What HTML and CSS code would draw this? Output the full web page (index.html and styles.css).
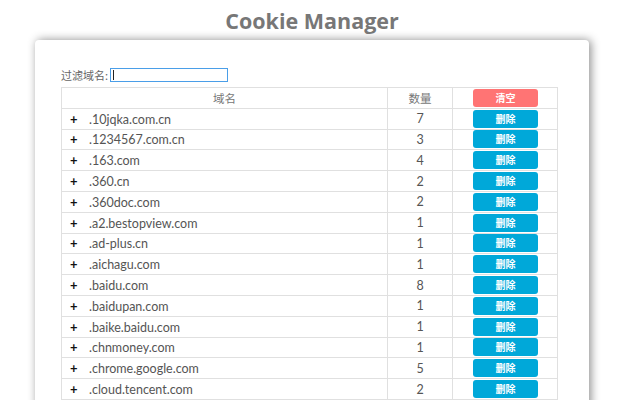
FILE: index.html
```html
<!DOCTYPE html>
<html>
<head>
<meta charset="utf-8">
<link rel="stylesheet" href="styles.css">
</head>
<body>
<h1 class="title">Cookie Manager</h1>
<div class="card">
  <div class="filter">
    <label class="filter-label">过滤域名:</label>
    <span class="filter-input"><span class="caret"></span></span>
  </div>
  <table class="cookies">
    <thead>
      <tr>
        <th class="col-domain">域名</th>
        <th class="col-count">数量</th>
        <th class="col-act"><button class="btn btn-clear">清空</button></th>
      </tr>
    </thead>
    <tbody>
      <tr><td class="domain"><span class="plus">+</span>.10jqka.com.cn</td><td class="count">7</td><td class="act"><button class="btn btn-del">删除</button></td></tr>
      <tr><td class="domain"><span class="plus">+</span>.1234567.com.cn</td><td class="count">3</td><td class="act"><button class="btn btn-del">删除</button></td></tr>
      <tr><td class="domain"><span class="plus">+</span>.163.com</td><td class="count">4</td><td class="act"><button class="btn btn-del">删除</button></td></tr>
      <tr><td class="domain"><span class="plus">+</span>.360.cn</td><td class="count">2</td><td class="act"><button class="btn btn-del">删除</button></td></tr>
      <tr><td class="domain"><span class="plus">+</span>.360doc.com</td><td class="count">2</td><td class="act"><button class="btn btn-del">删除</button></td></tr>
      <tr><td class="domain"><span class="plus">+</span>.a2.bestopview.com</td><td class="count">1</td><td class="act"><button class="btn btn-del">删除</button></td></tr>
      <tr><td class="domain"><span class="plus">+</span>.ad-plus.cn</td><td class="count">1</td><td class="act"><button class="btn btn-del">删除</button></td></tr>
      <tr><td class="domain"><span class="plus">+</span>.aichagu.com</td><td class="count">1</td><td class="act"><button class="btn btn-del">删除</button></td></tr>
      <tr><td class="domain"><span class="plus">+</span>.baidu.com</td><td class="count">8</td><td class="act"><button class="btn btn-del">删除</button></td></tr>
      <tr><td class="domain"><span class="plus">+</span>.baidupan.com</td><td class="count">1</td><td class="act"><button class="btn btn-del">删除</button></td></tr>
      <tr><td class="domain"><span class="plus">+</span>.baike.baidu.com</td><td class="count">1</td><td class="act"><button class="btn btn-del">删除</button></td></tr>
      <tr><td class="domain"><span class="plus">+</span>.chnmoney.com</td><td class="count">1</td><td class="act"><button class="btn btn-del">删除</button></td></tr>
      <tr><td class="domain"><span class="plus">+</span>.chrome.google.com</td><td class="count">5</td><td class="act"><button class="btn btn-del">删除</button></td></tr>
      <tr><td class="domain"><span class="plus">+</span>.cloud.tencent.com</td><td class="count">2</td><td class="act"><button class="btn btn-del">删除</button></td></tr>
    </tbody>
  </table>
</div>
</body>
</html>
```
FILE: styles.css
```css
html, body {
  margin: 0;
  padding: 0;
  background: #ffffff;
  overflow: hidden;
  height: 400px;
}
body {
  font-family: "Lato", "Noto Sans CJK SC", sans-serif;
  color: #555;
}
.title {
  margin: 0;
  height: 40px;
  line-height: 42px;
  text-align: center;
  font-family: "Open Sans", sans-serif;
  font-size: 21.5px;
  font-weight: 700;
  color: #777;
  padding-right: 16px;
}
.card {
  width: 554px;
  margin-left: 35px;
  background: #fff;
  border-radius: 4px;
  box-shadow: 2px 0 10px rgba(0, 0, 0, 0.45);
  padding: 27px 0 0 26px;
  box-sizing: border-box;
  height: 400px;
}
.filter {
  display: flex;
  align-items: center;
  height: 15px;
  margin-bottom: 5px;
}
.filter-label {
  font-size: 11px;
  color: #666;
  font-family: "Noto Sans CJK SC", sans-serif;
  margin-right: 2px;
}
.filter-input {
  width: 114px;
  height: 12px;
  border: 1px solid #4a9ee8;
  display: flex;
  align-items: center;
  padding-left: 2px;
}
.caret {
  width: 1px;
  height: 10px;
  background: #222;
}
.cookies {
  border-collapse: collapse;
  width: 496px;
  table-layout: fixed;
}
.cookies th, .cookies td {
  border: 1px solid #e0e0e0;
  height: 20.8px;
  padding: 0;
  box-sizing: border-box;
  font-size: 12.5px;
  font-weight: 400;
}
.col-domain { width: 326px; }
.col-count { width: 65px; }
.col-act { width: 105px; }
.cookies th {
  color: #777;
  font-family: "Noto Sans CJK SC", sans-serif;
  font-size: 11.5px;
}
.domain {
  padding-left: 8px !important;
  color: #555;
}
.plus {
  display: inline-block;
  width: 19px;
  font-weight: 700;
  color: #111;
  font-size: 13px;
}
.count {
  text-align: center;
  color: #555;
}
.act {
  text-align: center;
}
.btn {
  display: inline-block;
  width: 65px;
  height: 18px;
  border: none;
  border-radius: 3px;
  color: #fff;
  font-family: "Noto Sans CJK SC", sans-serif;
  font-size: 10px;
  font-weight: 700;
  padding: 0;
  line-height: 18px;
  vertical-align: middle;
  margin-left: 1px;
}
.btn-clear { background: #ff7474; }
.btn-del { background: #00a8d9; }
```
